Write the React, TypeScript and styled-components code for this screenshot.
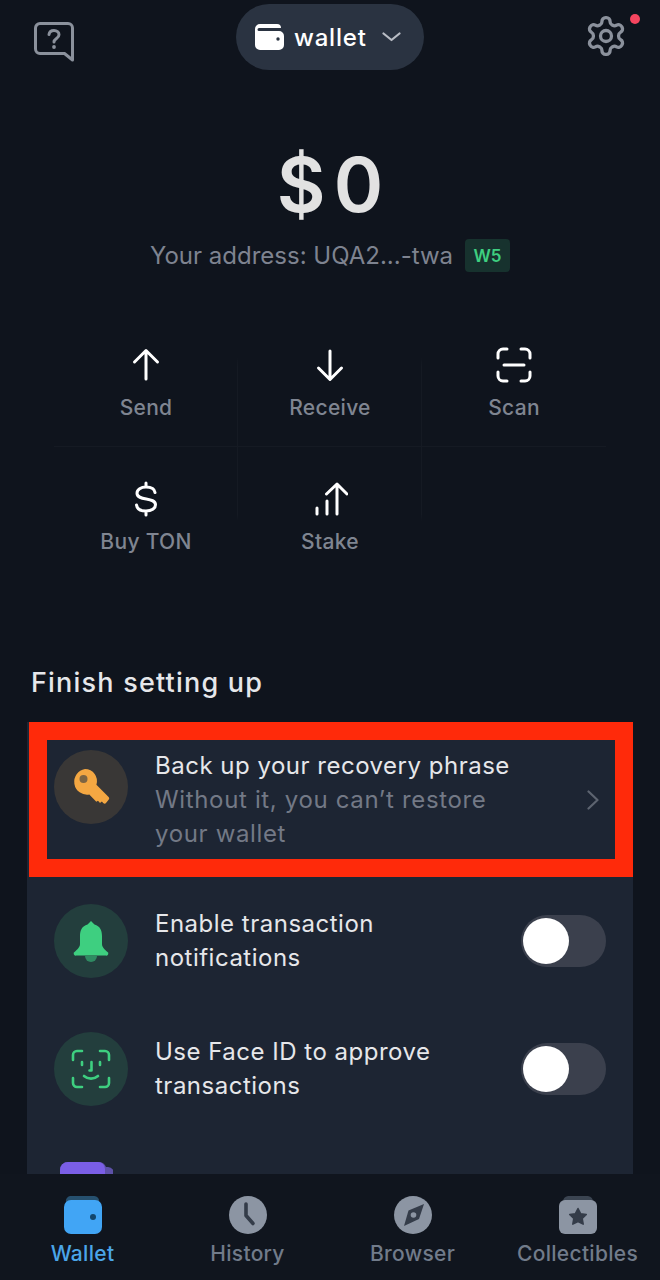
import React from 'react';
import styled, { createGlobalStyle } from 'styled-components';

const GlobalStyle = createGlobalStyle`
  html, body {
    margin: 0;
    padding: 0;
    background: #0f141d;
  }
  body {
    font-family: "Inter", "Noto Sans", "Liberation Sans", sans-serif;
  }
`;

const Page = styled.div`
  width: 660px;
  height: 1280px;
  display: flex;
  flex-direction: column;
  overflow: hidden;
  background: #0f141d;
`;

const Content = styled.div`
  flex: 1;
  min-height: 0;
  overflow: hidden;
`;

const TopBar = styled.div`
  display: flex;
  align-items: flex-start;
  justify-content: space-between;
  padding: 4px 32px 0 34px;
  height: 66px;
`;

const IconSlot = styled.div<{ $top: number }>`
  position: relative;
  padding-top: ${p => p.$top}px;
  line-height: 0;
`;

const Dot = styled.span`
  position: absolute;
  top: 10px;
  right: -12px;
  width: 10px;
  height: 10px;
  border-radius: 50%;
  background: #f5455f;
`;

const WalletPill = styled.div`
  display: flex;
  align-items: center;
  gap: 10px;
  height: 66px;
  width: 188px;
  margin-left: 2px;
  box-sizing: border-box;
  padding-left: 19px;
  border-radius: 33px;
  background: #2a3341;
  color: #fff;
  font-size: 24px;
  font-weight: 500;
  letter-spacing: 0.8px;
`;

const PillCaret = styled.span`
  margin-left: 5px;
  line-height: 0;
`;

const Balance = styled.div`
  margin-top: 70px;
  padding-left: 8px;
  text-align: center;
  color: #e2e2e2;
  font-size: 75px;
  line-height: 90px;
  font-weight: 600;
  letter-spacing: 8px;
`;

const AddressRow = styled.div`
  margin-top: 9px;
  display: flex;
  align-items: center;
  justify-content: center;
  gap: 12px;
  color: #7e8390;
  font-size: 24px;
  height: 33px;
`;

const Badge = styled.span`
  display: flex;
  align-items: center;
  justify-content: center;
  width: 45px;
  height: 33px;
  border-radius: 4px;
  background: #17322e;
  color: #3ecf80;
  font-size: 17px;
  font-weight: 600;
`;

const ActionGrid = styled.div`
  margin: 41px 54px 0;
  display: grid;
  grid-template-columns: repeat(3, 184px);
  grid-auto-rows: 134px;
`;

const lineColor = '#151a23';

const Action = styled.div<{ $divider?: boolean; $lower?: boolean }>`
  display: flex;
  flex-direction: column;
  align-items: center;
  padding-top: 34px;
  box-sizing: border-box;
  gap: 12px;
  color: #7f8591;
  font-size: 21px;
  font-weight: 500;
  letter-spacing: 0.3px;
  background-repeat: no-repeat;
  background-image:
    ${p =>
      p.$divider
        ? p.$lower
          ? `linear-gradient(to bottom, ${lineColor} 50%, transparent 55%)`
          : `linear-gradient(to bottom, transparent 33%, ${lineColor} 40%)`
        : 'none'},
    ${p => (p.$lower ? 'none' : `linear-gradient(${lineColor}, ${lineColor})`)};
  background-size: 1px 100%, 100% 1px;
  background-position: right top, left bottom;
`;

const ActionIcon = styled.div`
  width: 36px;
  height: 36px;
  line-height: 0;
`;

const SectionTitle = styled.h2`
  margin: 85px 0 0 31px;
  color: #e6e7ea;
  font-size: 27px;
  line-height: 34px;
  font-weight: 500;
  letter-spacing: 1.2px;
`;

const Panel = styled.div`
  margin: 22px 27px 0;
  background: #1d2533;
`;

const Row = styled.div<{ $flagged?: boolean }>`
  display: flex;
  align-items: center;
  box-sizing: border-box;
  height: ${p => (p.$flagged ? 155 : 128)}px;
  padding: ${p => (p.$flagged ? '0 16px 0 7px' : '0 27px')};
  margin-left: ${p => (p.$flagged ? 2 : 0)}px;
  border: ${p => (p.$flagged ? '18px solid #ff2a0a' : 'none')};
  gap: 27px;
`;

const Bubble = styled.div<{ $tone: string; $raised?: boolean }>`
  flex: none;
  width: 74px;
  height: 74px;
  border-radius: 50%;
  display: flex;
  align-items: center;
  justify-content: center;
  background: ${p => p.$tone};
  align-self: ${p => (p.$raised ? 'flex-start' : 'center')};
  margin-top: ${p => (p.$raised ? 10 : 0)}px;
`;

const RowText = styled.div`
  flex: 1;
  color: #e6e7ea;
  font-size: 24px;
  line-height: 34px;
  letter-spacing: 0.5px;
`;

const RowHint = styled.div`
  color: #737986;
  width: 360px;
  letter-spacing: 0.65px;
`;

const Chevron = styled.div`
  line-height: 0;
`;

const Switch = styled.div`
  position: relative;
  flex: none;
  width: 85px;
  height: 52px;
  border-radius: 26px;
  background: #3b404d;
`;

const Knob = styled.span`
  position: absolute;
  top: 3px;
  left: 2px;
  width: 46px;
  height: 46px;
  border-radius: 50%;
  background: #fff;
`;

const LastRow = styled.div`
  height: 100px;
  padding: 29px 0 0 33px;
  line-height: 0;
`;

const TabBar = styled.nav`
  flex: none;
  height: 106px;
  box-sizing: border-box;
  display: grid;
  grid-template-columns: 165px 165px 165px 165px;
  background: #10151e;
  padding-top: 22px;
`;

const Tab = styled.div<{ $active?: boolean }>`
  display: flex;
  flex-direction: column;
  align-items: center;
  gap: 8px;
  color: ${p => (p.$active ? '#4ba5e8' : '#717b8a')};
  font-size: 21px;
  line-height: 24px;
  font-weight: 500;
  letter-spacing: 0.3px;
  white-space: nowrap;
`;

const TabIcon = styled.div`
  width: 38px;
  height: 38px;
  line-height: 0;
`;

const HelpIcon = () => (
  <svg width="40" height="40" viewBox="0 0 40 40" fill="none">
    <path d="M6 1.5h28a4.5 4.5 0 0 1 4.500 4.500v32l-8-6.500H6A4.500 4.500 0 0 1 1.500 27V6A4.500 4.500 0 0 1 6 1.500z" stroke="#8b919c" strokeWidth="3" strokeLinejoin="round" />
    <path d="M15 12.500c.4-2.600 2.500-4 5-4 2.800 0 5 1.700 5 4.200 0 3.800-5 3.600-5 7.300" stroke="#8b919c" strokeWidth="3" strokeLinecap="round" />
    <circle cx="20" cy="25" r="1.900" fill="#8b919c" />
  </svg>
);

const GearIcon = () => (
  <svg width="44" height="44" viewBox="0 0 24 24" fill="none" stroke="#8b919c" strokeWidth="1.800" strokeLinecap="round" strokeLinejoin="round">
    <path d="M12.220 2h-.440a2 2 0 0 0-2 2v.180a2 2 0 0 1-1 1.730l-.430.250a2 2 0 0 1-2 0l-.150-.080a2 2 0 0 0-2.730.730l-.220.380a2 2 0 0 0 .730 2.730l.150.100a2 2 0 0 1 1 1.720v.510a2 2 0 0 1-1 1.740l-.150.090a2 2 0 0 0-.730 2.730l.220.380a2 2 0 0 0 2.730.730l.150-.080a2 2 0 0 1 2 0l.430.250a2 2 0 0 1 1 1.730V20a2 2 0 0 0 2 2h.440a2 2 0 0 0 2-2v-.180a2 2 0 0 1 1-1.730l.430-.250a2 2 0 0 1 2 0l.150.080a2 2 0 0 0 2.730-.730l.220-.390a2 2 0 0 0-.730-2.730l-.150-.080a2 2 0 0 1-1-1.740v-.500a2 2 0 0 1 1-1.740l.150-.090a2 2 0 0 0 .730-2.730l-.220-.380a2 2 0 0 0-2.730-.730l-.150.080a2 2 0 0 1-2 0l-.430-.250a2 2 0 0 1-1-1.730V4a2 2 0 0 0-2-2z" />
    <circle cx="12" cy="12" r="3" />
  </svg>
);

const PillWallet = () => (
  <svg width="29" height="26" viewBox="0 0 29 26">
    <path d="M5 0h17a4 4 0 0 1 4 4H4a1.500 1.500 0 0 0 0 3h20a5 5 0 0 1 5 5v9a5 5 0 0 1-5 5H5a5 5 0 0 1-5-5V5a5 5 0 0 1 5-5z" fill="#fff" />
    <circle cx="23" cy="15" r="1.700" fill="#2a3341" />
  </svg>
);

const SmallChevron = () => (
  <svg width="19" height="10" viewBox="0 0 19 10" fill="none">
    <path d="M1.500 1.500l8 6.500 8-6.500" stroke="#b9bdc5" strokeWidth="2.200" strokeLinecap="round" strokeLinejoin="round" />
  </svg>
);

const arrowProps = {
  width: 36,
  height: 36,
  viewBox: '0 0 36 36',
  fill: 'none',
  stroke: '#fff',
  strokeWidth: 3,
  strokeLinecap: 'round' as const,
  strokeLinejoin: 'round' as const,
};

const SendIcon = () => (
  <svg {...arrowProps}>
    <path d="M18 32V4M6.500 15L18 3.500 29.500 15" />
  </svg>
);

const ReceiveIcon = () => (
  <svg {...arrowProps}>
    <path d="M18 4v28M6.500 21L18 32.500 29.500 21" />
  </svg>
);

const ScanIcon = () => (
  <svg {...arrowProps}>
    <path d="M11 2H7a5 5 0 0 0-5 5v4M25 2h4a5 5 0 0 1 5 5v4M11 34H7a5 5 0 0 1-5-5v-4M25 34h4a5 5 0 0 0 5-5v-4M8 18h20" />
  </svg>
);

const DollarIcon = () => (
  <svg {...arrowProps}>
    <path d="M18 2v4M18 30v4M27 11.500C26.500 8 23 6 18 6c-5 0-9 2.500-9 6.300 0 8 18.500 3.500 18.500 11.400 0 3.800-4 6.300-9.500 6.300-5.500 0-9-2.300-9.500-6" />
  </svg>
);

const StakeIcon = () => (
  <svg {...arrowProps}>
    <path d="M25 33V3.500M14.500 13L25 3l10 10M15 33V20" />
    <path d="M5 33v-6" />
  </svg>
);

const KeyIcon = () => (
  <svg width="42" height="42" viewBox="0 0 42 42">
    <path d="M15 3a12 12 0 0 1 11.400 15.700l12.200 12.200a2 2 0 0 1 .200 2.600l-2.600 3.300a2 2 0 0 1-3 .1l-1.300-1.300-1.900 1.500-2-2.300-1.700 1-7-7.300A12 12 0 1 1 15 3z" fill="#f4a742" />
    <circle cx="13.500" cy="13" r="4" fill="#7c6443" />
  </svg>
);

const BellIcon = () => (
  <svg width="36" height="42" viewBox="0 0 36 42">
    <path d="M12 36h12a6 6 0 0 1-12 0z" fill="#2f8a62" />
    <path d="M18 1l3.500 3.500c5.500 1.500 7.500 6 7.500 11.500v8c0 3.500 2.800 5.300 5.200 7.800a2 2 0 0 1-1.500 3.700H3.300a2 2 0 0 1-1.500-3.700C4.200 29.300 7 27.500 7 24v-8c0-5.500 2-10 7.500-11.500z" fill="#3ecf80" />
  </svg>
);

const FaceIcon = () => (
  <svg width="40" height="40" viewBox="0 0 40 40" fill="none" stroke="#3ecf80" strokeWidth="2.600" strokeLinecap="round" strokeLinejoin="round">
    <path d="M11 2H6a4 4 0 0 0-4 4v5M29 2h5a4 4 0 0 1 4 4v5M11 38H6a4 4 0 0 1-4-4v-5M29 38h5a4 4 0 0 0 4-4v-5" />
    <path d="M11 13v3M29 13v3M20.500 13v8.500h-2M13 27c4 3.500 10 3.500 14 0" />
  </svg>
);

const PurpleWallet = () => (
  <svg width="53" height="14" viewBox="0 0 53 14">
    <path d="M0 14V8a8 8 0 0 1 8-8h30a8 8 0 0 1 8 5h1a6 6 0 0 1 6 9z" fill="#5d51a8" />
    <path d="M0 14V8a8 8 0 0 1 8-8h30a7 7 0 0 1 7 7v7z" fill="#7a5ee6" />
  </svg>
);

const RowChevron = () => (
  <svg width="12" height="20" viewBox="0 0 12 20" fill="none">
    <path d="M1.500 1.500L10.500 10l-9 8.500" stroke="#5d6470" strokeWidth="2.200" strokeLinecap="round" strokeLinejoin="round" />
  </svg>
);

const TabWallet = () => (
  <svg width="38" height="38" viewBox="0 0 38 38">
    <path d="M6 0h24a5 5 0 0 1 5 6H2a5 5 0 0 1 4-6z" fill="#26506f" />
    <rect x="0" y="4" width="38" height="34" rx="7" fill="#41a5f5" />
    <circle cx="29" cy="21" r="3" fill="#12466c" />
  </svg>
);

const TabHistory = () => (
  <svg width="38" height="38" viewBox="0 0 38 38">
    <circle cx="19" cy="19" r="19" fill="#8c95a3" />
    <path d="M17 8v11.500l7 8" fill="none" stroke="#343c49" strokeWidth="3.600" strokeLinecap="round" strokeLinejoin="round" />
  </svg>
);

const TabBrowser = () => (
  <svg width="38" height="38" viewBox="0 0 38 38">
    <circle cx="19" cy="19" r="19" fill="#8c95a3" />
    <path d="M30 8l-5 15-15 7 4.500-15.500z" fill="#343c49" />
    <circle cx="19.500" cy="19" r="2.800" fill="#8c95a3" />
  </svg>
);

const TabCollectibles = () => (
  <svg width="38" height="38" viewBox="0 0 38 38">
    <path d="M9 0h20a6 6 0 0 1 5 6H4a6 6 0 0 1 5-6z" fill="#3b4451" />
    <rect x="0" y="4" width="38" height="34" rx="6" fill="#8c95a3" />
    <path d="M19 12.500l2.600 5.200 5.700.8-4.100 4 1 5.700-5.200-2.700-5.200 2.700 1-5.700-4.100-4 5.700-.8z" fill="#343c49" stroke="#343c49" strokeWidth="1.500" strokeLinejoin="round" />
  </svg>
);

const actions = [
  { label: 'Send', icon: <SendIcon />, divider: true },
  { label: 'Receive', icon: <ReceiveIcon />, divider: true },
  { label: 'Scan', icon: <ScanIcon /> },
  { label: 'Buy TON', icon: <DollarIcon />, divider: true, lower: true },
  { label: 'Stake', icon: <StakeIcon />, divider: true, lower: true },
];

const tabs = [
  { label: 'Wallet', icon: <TabWallet />, active: true },
  { label: 'History', icon: <TabHistory /> },
  { label: 'Browser', icon: <TabBrowser /> },
  { label: 'Collectibles', icon: <TabCollectibles /> },
];

const App = () => {
  return (
    <Page>
      <GlobalStyle />
      <Content>
        <TopBar>
          <IconSlot $top={18}><HelpIcon /></IconSlot>
          <WalletPill>
            <PillWallet />
            wallet
            <PillCaret><SmallChevron /></PillCaret>
          </WalletPill>
          <IconSlot $top={10}>
            <GearIcon />
            <Dot />
          </IconSlot>
        </TopBar>

        <Balance>$0</Balance>
        <AddressRow>
          Your address: UQA2...-twa
          <Badge>W5</Badge>
        </AddressRow>

        <ActionGrid>
          {actions.map(item => (
            <Action key={item.label} $divider={item.divider} $lower={item.lower}>
              <ActionIcon>{item.icon}</ActionIcon>
              {item.label}
            </Action>
          ))}
        </ActionGrid>

        <SectionTitle>Finish setting up</SectionTitle>
        <Panel>
          <Row $flagged>
            <Bubble $tone="#393736" $raised><KeyIcon /></Bubble>
            <RowText>
              Back up your recovery phrase
              <RowHint>Without it, you can’t restore your wallet</RowHint>
            </RowText>
            <Chevron><RowChevron /></Chevron>
          </Row>
          <Row>
            <Bubble $tone="#233e3d"><BellIcon /></Bubble>
            <RowText>Enable transaction<br />notifications</RowText>
            <Switch><Knob /></Switch>
          </Row>
          <Row>
            <Bubble $tone="#233e3d"><FaceIcon /></Bubble>
            <RowText>Use Face ID to approve<br />transactions</RowText>
            <Switch><Knob /></Switch>
          </Row>
          <LastRow><PurpleWallet /></LastRow>
        </Panel>
      </Content>

      <TabBar>
        {tabs.map(tab => (
          <Tab key={tab.label} $active={tab.active}>
            <TabIcon>{tab.icon}</TabIcon>
            {tab.label}
          </Tab>
        ))}
      </TabBar>
    </Page>
  );
};

export default App;
